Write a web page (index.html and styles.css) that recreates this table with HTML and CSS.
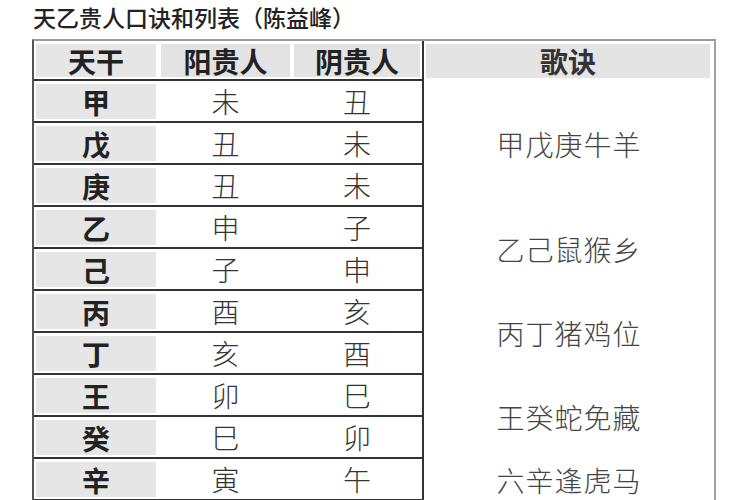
FILE: index.html
```html
<!DOCTYPE html>
<html lang="zh">
<head>
<meta charset="utf-8">
<title>天乙贵人口诀和列表</title>
<link rel="stylesheet" href="styles.css">
</head>
<body>
<div class="title">天乙贵人口诀和列表（陈益峰）</div>
<div class="grid">
  <div class="cell head gan">天干</div>
  <div class="cell head">阳贵人</div>
  <div class="cell head last">阴贵人</div>
  <div class="song-head"><span>歌诀</span></div>

  <div class="cell gan">甲</div><div class="cell">未</div><div class="cell last">丑</div>
  <div class="cell gan">戊</div><div class="cell">丑</div><div class="cell last">未</div>
  <div class="cell gan">庚</div><div class="cell">丑</div><div class="cell last">未</div>
  <div class="cell gan">乙</div><div class="cell">申</div><div class="cell last">子</div>
  <div class="cell gan">己</div><div class="cell">子</div><div class="cell last">申</div>
  <div class="cell gan">丙</div><div class="cell">酉</div><div class="cell last">亥</div>
  <div class="cell gan">丁</div><div class="cell">亥</div><div class="cell last">酉</div>
  <div class="cell gan">王</div><div class="cell">卯</div><div class="cell last">巳</div>
  <div class="cell gan">癸</div><div class="cell">巳</div><div class="cell last">卯</div>
  <div class="cell gan">辛</div><div class="cell">寅</div><div class="cell last">午</div>

  <div class="song g1">甲戊庚牛羊</div>
  <div class="song g2">乙己鼠猴乡</div>
  <div class="song g3">丙丁猪鸡位</div>
  <div class="song g4">王癸蛇免藏</div>
  <div class="song g5">六辛逢虎马</div>
</div>
</body>
</html>
```
FILE: styles.css
```css
* { box-sizing: border-box; }
html, body { margin: 0; padding: 0; background: #fff; }
body {
  width: 750px;
  height: 500px;
  overflow: hidden;
  font-family: "Noto Sans CJK SC", "Noto Sans", sans-serif;
  color: #222;
}
.title {
  margin: 3px 0 0 33px;
  font-size: 23px;
  line-height: 29px;
  font-weight: 500;
  color: #222;
}
.grid {
  margin: 7px 0 0 32px;
  width: 684px;
  display: grid;
  grid-template-columns: 125px 133px 132px 1fr;
  grid-template-rows: 40px repeat(10, 42px);
  border-top: 2px solid #9a9a9a;
  border-left: 2px solid #555;
  border-right: 2px solid #a0a0a0;
}
.cell {
  display: flex;
  align-items: center;
  justify-content: center;
  font-size: 28px;
  font-weight: 300;
  border-bottom: 2px solid #333;
  color: #333;
}
.cell.last { border-right: 2px solid #333; }
.head {
  font-weight: 700;
  color: #222;
  padding: 3px 2px 2px 2px;
  background: #e3e3e3;
  background-clip: content-box;
}
.gan {
  font-weight: 700;
  color: #222;
  padding: 3px 3px 2px 2px;
  background: #e6e6e6;
  background-clip: content-box;
}
.song-head {
  grid-column: 4;
  grid-row: 1;
  padding: 3px 4px 3px 2px;
  display: flex;
}
.song-head span {
  flex: 1;
  background: #e4e4e4;
  display: flex;
  align-items: center;
  justify-content: center;
  font-size: 28px;
  font-weight: 700;
  color: #333;
}
.song {
  grid-column: 4;
  display: flex;
  align-items: center;
  justify-content: center;
  font-size: 28px;
  font-weight: 300;
  letter-spacing: 1px;
  color: #444;
}
.g1 { grid-row: 2 / span 3; }
.g2 { grid-row: 5 / span 2; }
.g3 { grid-row: 7 / span 2; }
.g4 { grid-row: 9 / span 2; }
.g5 { grid-row: 11; }
```
